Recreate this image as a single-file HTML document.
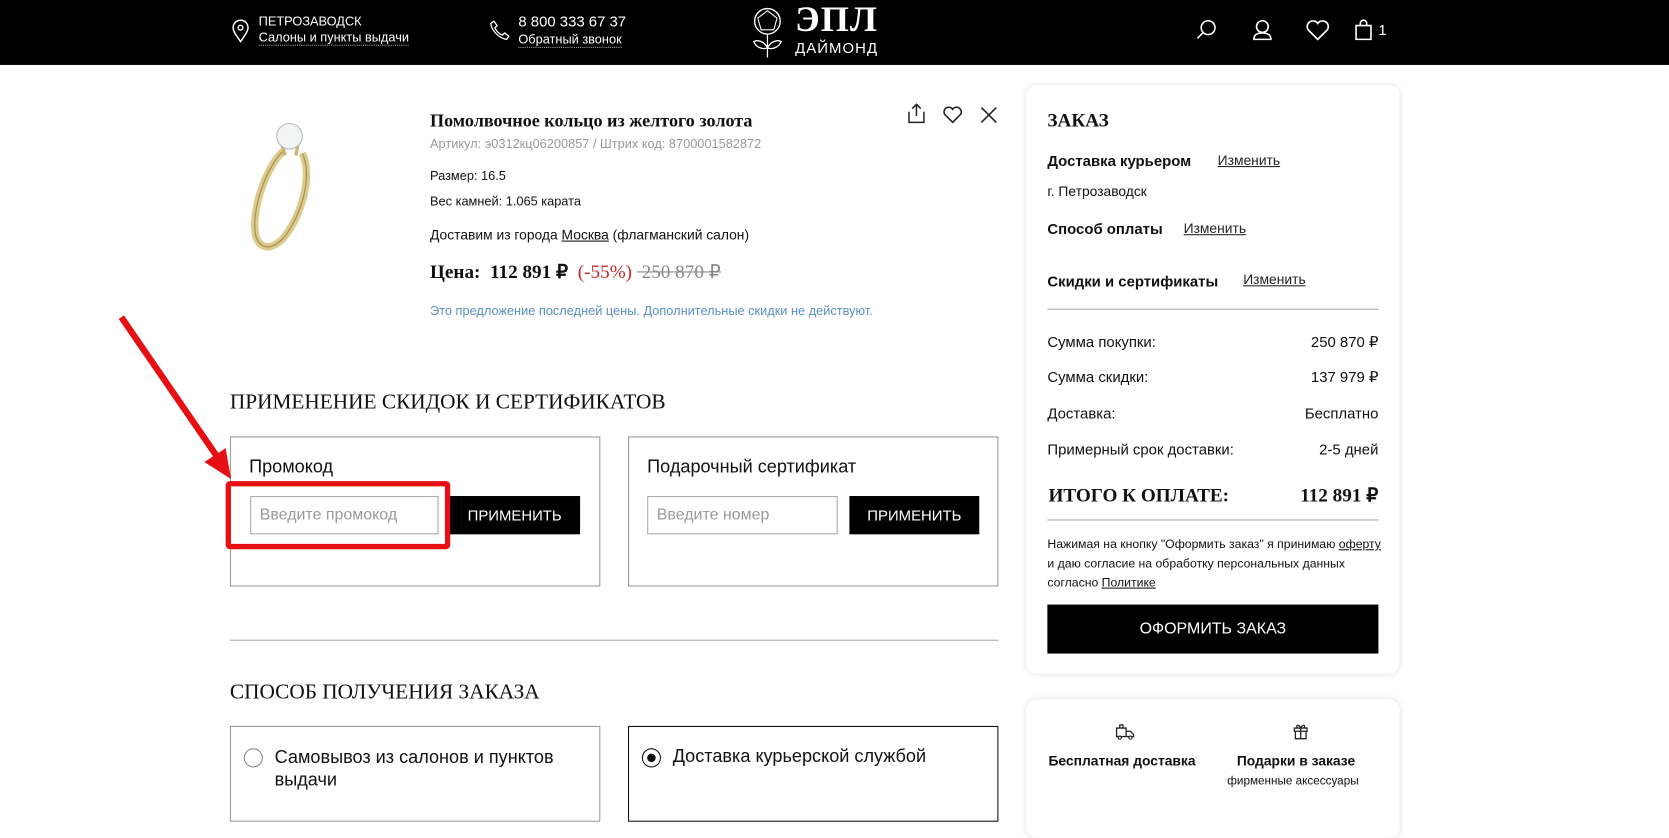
<!DOCTYPE html>
<html><head><meta charset="utf-8"><style>
*{box-sizing:border-box;margin:0;padding:0}
body{width:1669px;height:816px;overflow:hidden;background:#fff;font-family:"Liberation Sans",Arial,sans-serif;color:#111;position:relative}
#w{position:absolute;left:0;top:0;width:1568px;height:767px;transform:scale(1.06441);transform-origin:0 0}
.abs{position:absolute}
.hdr{left:0;top:0;width:1568px;height:61px;background:#000;color:#fff}
.serif{font-family:"Liberation Serif","Times New Roman",serif}
u.d{text-decoration:none;border-bottom:1px dotted #aaa}
.box{border:1px solid #999}
.btn{background:#000;color:#fff;font-size:14px;text-align:center;line-height:36px}
.inp{border:1px solid #aaa;color:#999;font-size:15px;padding-left:8px;line-height:34px}
.card{background:#fff;border-radius:10px;box-shadow:0 0 6px rgba(0,0,0,.12)}
.row{font-size:14px}
.lnk{text-decoration:underline;font-size:13px;color:#222}
</style></head><body><div id="w">
<div class="abs hdr">
 <svg class="abs" style="left:218px;top:18px" width="16" height="22" viewBox="0 0 16 22"><path d="M8 21C3 14 1 11 1 8a7 7 0 0 1 14 0c0 3-2 6-7 13z" fill="none" stroke="#fff" stroke-width="1.4"/><circle cx="8" cy="8" r="2.2" fill="none" stroke="#fff" stroke-width="1.3"/></svg>
 <div class="abs" style="left:243px;top:13px;font-size:12px;line-height:15px">ПЕТРОЗАВОДСК<br><u class="d">Салоны и пункты выдачи</u></div>
 <svg class="abs" style="left:460px;top:18px" width="20" height="20" viewBox="0 0 20 20"><path d="M4 2l3 4-2 2c1 3 4 6 7 7l2-2 4 3-2 3C9 18 2 11 1 4z" fill="none" stroke="#fff" stroke-width="1.2"/></svg>
 <div class="abs" style="left:487px;top:12px;font-size:14px;line-height:16px">8 800 333 67 37<br><u class="d" style="font-size:12px">Обратный звонок</u></div>
 <svg class="abs" style="left:702px;top:5px" width="42" height="50" viewBox="0 0 42 50"><circle cx="19" cy="15" r="12" fill="none" stroke="#fff" stroke-width="1.3"/><polygon points="19,5 28,12 25,23 13,23 10,12" fill="none" stroke="#fff" stroke-width="1"/><path d="M19 27v22M19 40c-3-6-9-8-13-6 2 5 8 8 13 6zM19 40c3-6 9-8 13-6-2 5-8 8-13 6z" fill="none" stroke="#fff" stroke-width="1.2"/></svg>
 <div class="abs serif" style="left:747px;top:0px;font-size:34px;font-weight:bold;letter-spacing:1px">ЭПЛ</div>
 <div class="abs" style="left:747px;top:37px;font-size:14px;letter-spacing:1px">ДАЙМОНД</div>
 <svg class="abs" style="left:1124px;top:18px" width="20" height="20" viewBox="0 0 20 20"><circle cx="11" cy="8" r="6.5" fill="none" stroke="#fff" stroke-width="1.5"/><path d="M6 13l-5 5" stroke="#fff" stroke-width="1.5"/></svg>
 <svg class="abs" style="left:1175px;top:17px" width="22" height="22" viewBox="0 0 22 22"><circle cx="11" cy="8" r="5.5" fill="none" stroke="#fff" stroke-width="1.5"/><path d="M3 20c0-5 4-6 8-6s8 1 8 6z" fill="none" stroke="#fff" stroke-width="1.5"/></svg>
 <svg class="abs" style="left:1227px;top:19px" width="22" height="19" viewBox="0 0 22 19"><path d="M11 18L2 9a5 5 0 0 1 9-6 5 5 0 0 1 9 6z" fill="none" stroke="#fff" stroke-width="1.6"/></svg>
 <svg class="abs" style="left:1273px;top:18px" width="16" height="20" viewBox="0 0 16 20"><path d="M1 6h14v13H1zM5 6V4a3 3 0 0 1 6 0v2" fill="none" stroke="#fff" stroke-width="1.5"/></svg>
 <div class="abs" style="left:1295px;top:20px;font-size:14px">1</div>
</div>

<svg class="abs" style="left:232px;top:102px" width="70" height="140" viewBox="0 0 70 140">
 <path d="M34 40C18 55 4 95 8 118c3 14 14 16 26 4C52 100 62 62 52 42" fill="none" stroke="#dccb8f" stroke-width="7"/>
 <path d="M34 40C18 55 4 95 8 118c3 14 14 16 26 4C52 100 62 62 52 42" fill="none" stroke="#a89350" stroke-width="1.2"/>
 <path d="M30 24l6 20M50 22l-4 22" stroke="#c8b36c" stroke-width="3"/>
 <circle cx="40" cy="26" r="12" fill="#f1f3f5" stroke="#b8b8b8"/>
</svg>
<div class="abs serif" style="left:404px;top:104px;font-size:17px;font-weight:bold">Помолвочное кольцо из желтого золота</div>
<div class="abs" style="left:404px;top:128px;font-size:12px;color:#999">Артикул: э0312кц06200857 / Штрих код: 8700001582872</div>
<div class="abs" style="left:404px;top:158px;font-size:12px">Размер: 16.5</div>
<div class="abs" style="left:404px;top:182px;font-size:12px">Вес камней: 1.065 карата</div>
<div class="abs" style="left:404px;top:213px;font-size:13px">Доставим из города <u>Москва</u> (флагманский салон)</div>
<div class="abs serif" style="left:404px;top:245px;font-size:18px;font-weight:bold">Цена:&nbsp; 112 891 ₽ <span style="color:#c62828;font-weight:normal">&nbsp;(-55%)</span> <s style="color:#888;font-weight:normal">&nbsp;250 870 ₽</s></div>
<div class="abs" style="left:404px;top:285px;font-size:12px;color:#5a8fc0">Это предложение последней цены. Дополнительные скидки не действуют.</div>
<svg class="abs" style="left:852px;top:96px" width="18" height="20" viewBox="0 0 18 20"><path d="M9 13V2M5 6l4-4 4 4M2 9v10h14V9" fill="none" stroke="#222" stroke-width="1.4"/></svg>
<svg class="abs" style="left:886px;top:100px" width="18" height="16" viewBox="0 0 22 19"><path d="M11 18L2 9a5 5 0 0 1 9-6 5 5 0 0 1 9 6z" fill="none" stroke="#222" stroke-width="1.8"/></svg>
<svg class="abs" style="left:921px;top:100px" width="16" height="16" viewBox="0 0 16 16"><path d="M1 1l14 14M15 1L1 15" stroke="#222" stroke-width="1.5"/></svg>

<div class="abs serif" style="left:216px;top:367px;font-size:20px">ПРИМЕНЕНИЕ СКИДОК И СЕРТИФИКАТОВ</div>
<div class="abs box" style="left:216px;top:410px;width:348px;height:141px"></div>
<div class="abs" style="left:234px;top:429px;font-size:17px">Промокод</div>
<div class="abs inp" style="left:235px;top:466px;width:177px;height:36px">Введите промокод</div>
<div class="abs btn" style="left:422px;top:466px;width:123px;height:36px">ПРИМЕНИТЬ</div>
<div class="abs" style="left:212px;top:452px;width:211px;height:64px;border:5px solid #e50f14;border-radius:4px"></div>
<div class="abs box" style="left:590px;top:410px;width:348px;height:141px"></div>
<div class="abs" style="left:608px;top:429px;font-size:17px">Подарочный сертификат</div>
<div class="abs inp" style="left:608px;top:466px;width:179px;height:36px">Введите номер</div>
<div class="abs btn" style="left:798px;top:466px;width:122px;height:36px">ПРИМЕНИТЬ</div>
<svg class="abs" style="left:100px;top:290px" width="130" height="170"><line x1="14" y1="8" x2="106" y2="142" stroke="#e50f14" stroke-width="6"/><polygon points="117,160 92,144 112,131" fill="#e50f14"/></svg>

<div class="abs" style="left:216px;top:601px;width:722px;height:1px;background:#aaa"></div>
<div class="abs serif" style="left:216px;top:639px;font-size:20px">СПОСОБ ПОЛУЧЕНИЯ ЗАКАЗА</div>
<div class="abs box" style="left:216px;top:682px;width:348px;height:90px"></div>
<div class="abs" style="left:229px;top:703px;width:18px;height:18px;border:1.5px solid #888;border-radius:50%"></div>
<div class="abs" style="left:258px;top:701px;font-size:17px;line-height:21px">Самовывоз из салонов и пунктов<br>выдачи</div>
<div class="abs" style="left:590px;top:682px;width:348px;height:90px;border:1px solid #111"></div>
<div class="abs" style="left:603px;top:703px;width:18px;height:18px;border:1.5px solid #111;border-radius:50%"><div style="margin:3.5px;width:8px;height:8px;background:#111;border-radius:50%"></div></div>
<div class="abs" style="left:632px;top:701px;font-size:17px">Доставка курьерской службой</div>

<div class="abs card" style="left:964px;top:80px;width:351px;height:553px"></div>
<div class="abs serif" style="left:984px;top:103px;font-size:18px;font-weight:bold">ЗАКАЗ</div>
<div class="abs row" style="left:984px;top:143px;font-weight:bold">Доставка курьером</div><div class="abs lnk" style="left:1144px;top:143px">Изменить</div>
<div class="abs" style="left:984px;top:172px;font-size:13px">г. Петрозаводск</div>
<div class="abs row" style="left:984px;top:207px;font-weight:bold">Способ оплаты</div><div class="abs lnk" style="left:1112px;top:207px">Изменить</div>
<div class="abs row" style="left:984px;top:256px;font-weight:bold">Скидки и сертификаты</div><div class="abs lnk" style="left:1168px;top:255px">Изменить</div>
<div class="abs" style="left:984px;top:290px;width:311px;height:1px;background:#aaa"></div>
<div class="abs row" style="left:984px;top:313px">Сумма покупки:</div><div class="abs row" style="left:1195px;top:313px;width:100px;text-align:right">250 870 ₽</div>
<div class="abs row" style="left:984px;top:346px">Сумма скидки:</div><div class="abs row" style="left:1195px;top:346px;width:100px;text-align:right">137 979 ₽</div>
<div class="abs row" style="left:984px;top:380px">Доставка:</div><div class="abs row" style="left:1195px;top:380px;width:100px;text-align:right">Бесплатно</div>
<div class="abs row" style="left:984px;top:414px">Примерный срок доставки:</div><div class="abs row" style="left:1195px;top:414px;width:100px;text-align:right">2-5 дней</div>
<div class="abs serif" style="left:985px;top:455px;font-size:18px;font-weight:bold">ИТОГО К ОПЛАТЕ:</div><div class="abs serif" style="left:1175px;top:455px;width:120px;text-align:right;font-size:18px;font-weight:bold">112 891 ₽</div>
<div class="abs" style="left:984px;top:488px;width:311px;height:1px;background:#aaa"></div>
<div class="abs" style="left:984px;top:503px;font-size:11.5px;line-height:18px;width:320px">Нажимая на кнопку "Оформить заказ" я принимаю <u>оферту</u> и даю согласие на обработку персональных данных согласно <u>Политике</u></div>
<div class="abs btn" style="left:984px;top:568px;width:311px;height:46px;line-height:46px;font-size:15px">ОФОРМИТЬ ЗАКАЗ</div>

<div class="abs card" style="left:964px;top:657px;width:351px;height:130px"></div>
<svg class="abs" style="left:1047px;top:679px" width="20" height="16" viewBox="0 0 20 16"><path d="M2 5h9v8H2zM11 8h4l3 3v2h-7M5 5V2h3v3" fill="none" stroke="#222" stroke-width="1.2"/><circle cx="5" cy="14" r="1.5" fill="#fff" stroke="#222"/><circle cx="15" cy="14" r="1.5" fill="#fff" stroke="#222"/></svg>
<svg class="abs" style="left:1214px;top:679px" width="16" height="16" viewBox="0 0 16 16"><path d="M2 5h12v3H2zM3 8h10v7H3zM8 5v10M8 5C6 1 3 2 5 5M8 5c2-4 5-3 3 0" fill="none" stroke="#222" stroke-width="1.2"/></svg>
<div class="abs" style="left:985px;top:707px;font-size:13px;font-weight:bold">Бесплатная доставка</div>
<div class="abs" style="left:1162px;top:707px;font-size:13px;font-weight:bold">Подарки в заказе</div>
<div class="abs" style="left:1153px;top:728px;font-size:11px">фирменные аксессуары</div>
</div></body></html>
